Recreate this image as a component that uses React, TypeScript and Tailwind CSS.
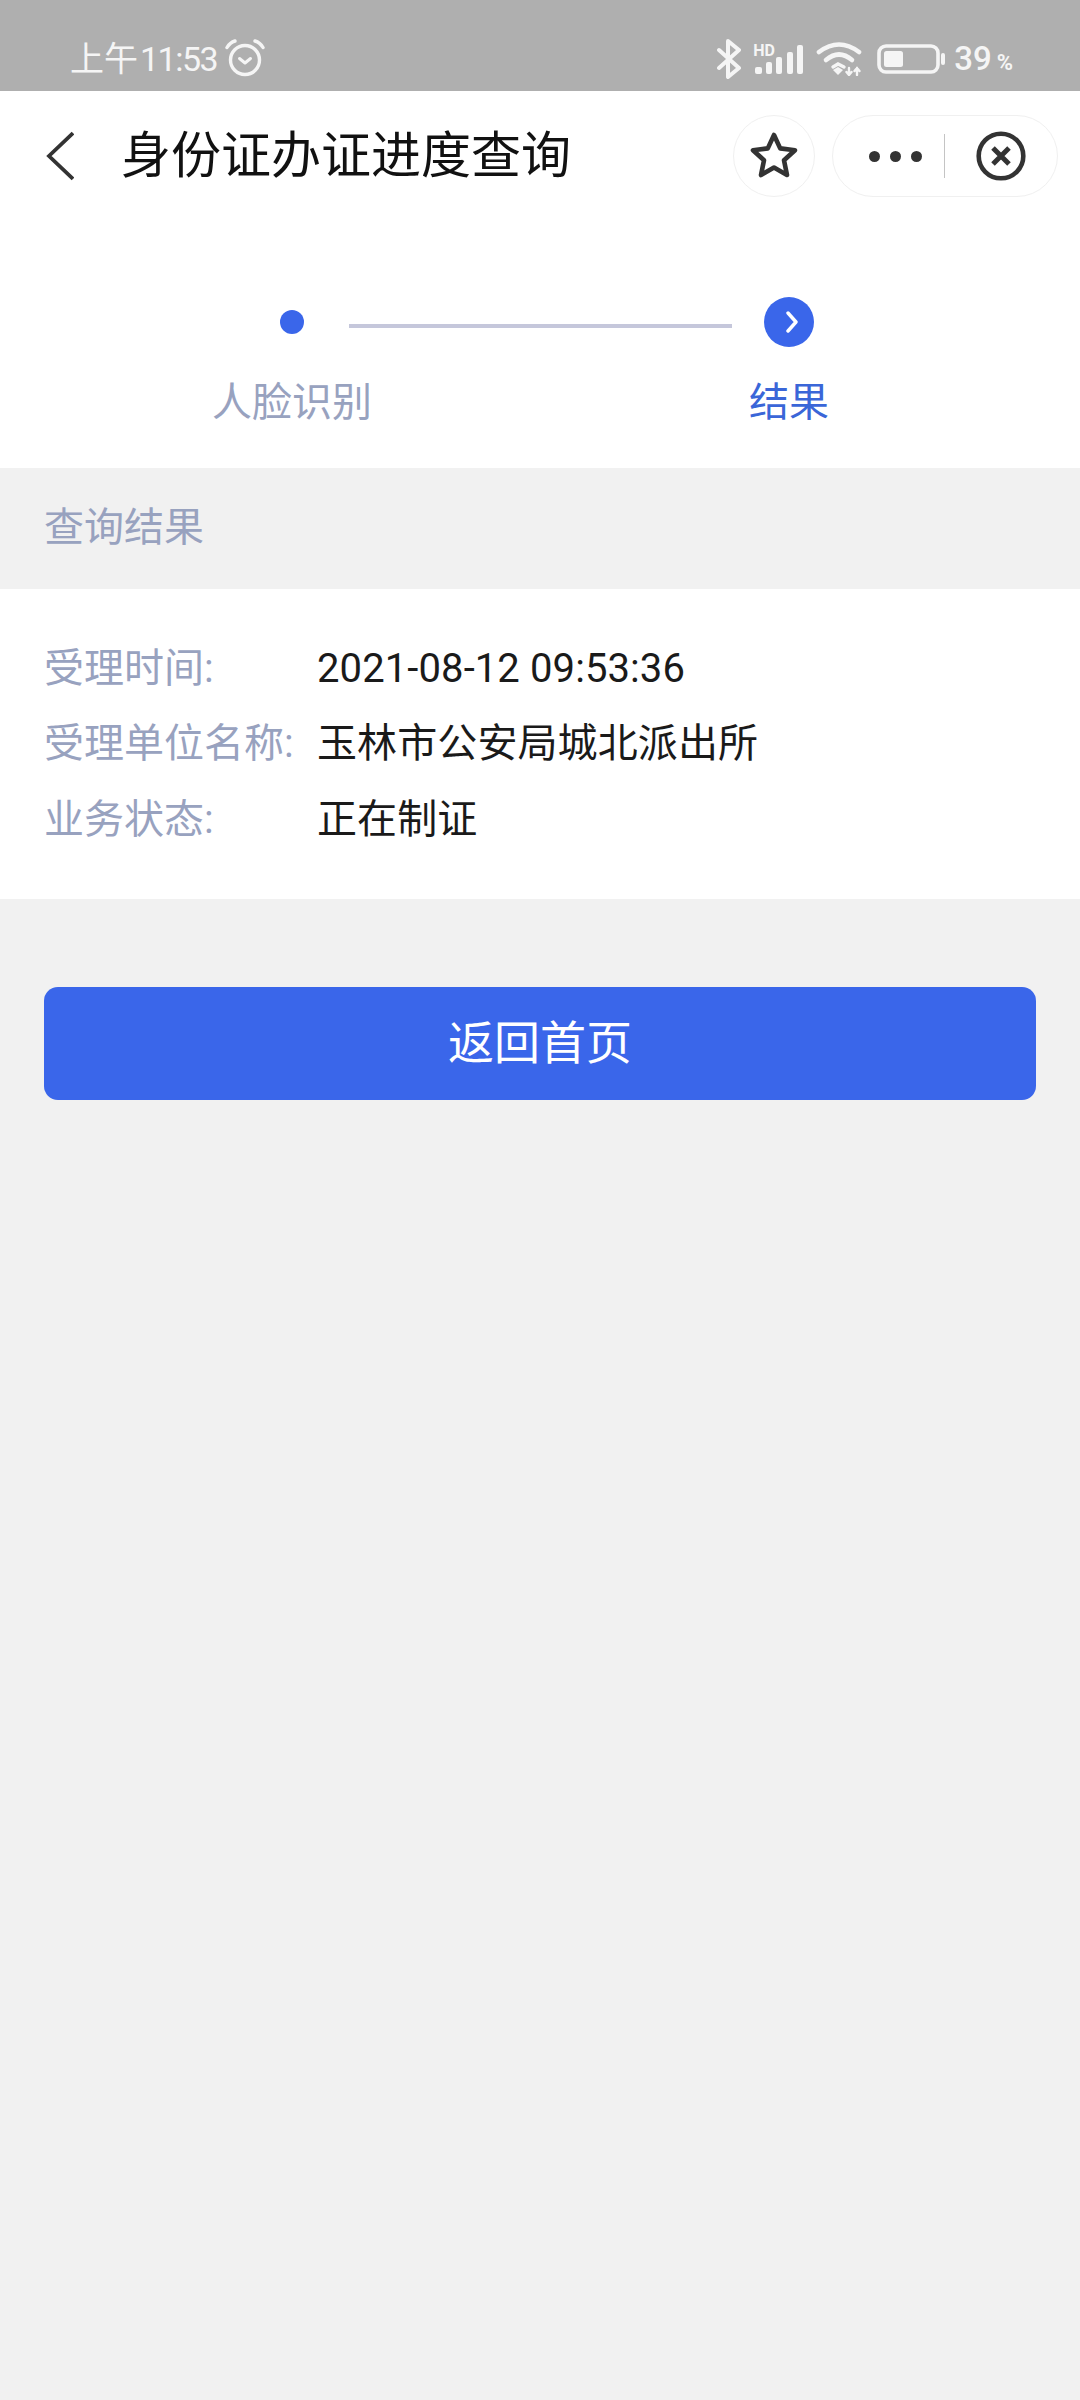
const rows = [
  { label: "受理时间:", value: "2021-08-12 09:53:36" },
  { label: "受理单位名称:", value: "玉林市公安局城北派出所" },
  { label: "业务状态:", value: "正在制证" },
];

function AlarmIcon() {
  return (
    <svg width="40" height="38" viewBox="0 0 40 38" fill="none" stroke="#f5f5f5" strokeLinecap="round" strokeLinejoin="round">
      <circle cx="20" cy="21" r="14.5" strokeWidth="3.4" />
      <path d="M14.5 19.5 L20 24 L25.5 19.5" strokeWidth="3" />
      <path d="M2 8.5 Q5 3.5 10 2" strokeWidth="3.4" />
      <path d="M38 8.5 Q35 3.5 30 2" strokeWidth="3.4" />
    </svg>
  );
}

function StatusIcons() {
  return (
    <div className="flex items-center text-[#f5f5f5]">
      <svg width="24" height="40" viewBox="0 0 24 40" fill="none" stroke="#f5f5f5" strokeWidth="4" strokeLinecap="round" strokeLinejoin="round">
        <path d="M2 11 L22 29 L11 38 L11 2 L22 11 L2 29" />
      </svg>
      <div className="relative ml-3 h-[32px] w-[50px]">
        <svg width="50" height="32" viewBox="0 0 50 32" fill="#f5f5f5">
          <rect x="2" y="24" width="7" height="7" rx="2" />
          <rect x="13" y="19" width="6" height="12" rx="2" />
          <rect x="23" y="14" width="6" height="17" rx="2" />
          <rect x="34" y="9" width="6" height="22" rx="2" />
          <rect x="44" y="2" width="6" height="29" rx="2" />
        </svg>
        <span className="absolute left-0 top-0 text-[16px] font-bold leading-[16px]">HD</span>
      </div>
      <svg className="ml-[13px]" width="46" height="34" viewBox="0 0 46 34" fill="none" stroke="#f5f5f5" strokeWidth="4.6" strokeLinecap="round">
        <path d="M3 10 Q23 -5 43 10" />
        <path d="M10 18 Q23 7 36 18" />
        <path d="M17 25 L22 22 L28 25" strokeWidth="3.4" />
        <path d="M17 28 L22 25 L27 28 L22 33 Z" fill="#f5f5f5" stroke="none" />
        <path d="M33 26 L33 33 M30.5 30 L33 33 L35.5 30 M41 33 L41 26 M38.5 29 L41 26 L43.5 29" strokeWidth="2.4" />
      </svg>
      <svg className="ml-[15px]" width="68" height="30" viewBox="0 0 68 30" fill="none">
        <rect x="2" y="2" width="59" height="26" rx="7" stroke="#f5f5f5" strokeWidth="3.6" />
        <rect x="7" y="7" width="19" height="16" rx="2.5" fill="#f5f5f5" />
        <rect x="64" y="9" width="4" height="12" rx="2" fill="#f5f5f5" />
      </svg>
      <span className="ml-[9px] text-[33px] font-medium leading-[40px]">39</span>
      <span className="ml-[5px] mt-[8px] text-[22px] font-bold leading-[26px]">%</span>
    </div>
  );
}

export default function App() {
  return (
    <div className="flex min-h-[2400px] w-[1080px] flex-col bg-[#f1f1f1] font-['Roboto','Noto_Sans_CJK_SC',sans-serif]">
      <div className="flex h-[91px] items-center justify-between bg-[#afafaf] pb-[1px] pl-[70px] pr-[67px] pt-[28px]">
        <div className="flex items-center">
          <span className="text-[34px] leading-[40px] text-[#f5f5f5]">
            上午<span className="ml-[2px] tracking-[-1.5px]">11:53</span>
          </span>
          <span className="ml-[8px] -mt-[2px]">
            <AlarmIcon />
          </span>
        </div>
        <StatusIcons />
      </div>

      <div className="flex h-[130px] items-center bg-white pl-[46px] pr-[22px]">
        <svg width="28" height="50" viewBox="0 0 28 50" fill="none" stroke="#333333" strokeWidth="3.8">
          <path d="M27 2 L3 25 L27 48" />
        </svg>
        <h1 className="ml-[47px] flex-1 text-[50px] font-normal leading-[60px] text-[#111111]">身份证办证进度查询</h1>
        <div className="flex h-[82px] w-[82px] items-center justify-center rounded-full border border-[#f0f0f0]">
          <svg width="48" height="48" viewBox="0 0 48 48" fill="none" stroke="#333333" strokeWidth="4.6" strokeLinejoin="round">
            <path d="M24 3 L30.2 16.4 L45 18.2 L34 28.2 L37 43 L24 35.6 L11 43 L14 28.2 L3 18.2 L17.8 16.4 Z" />
          </svg>
        </div>
        <div className="ml-[17px] flex h-[82px] w-[226px] items-center rounded-full border border-[#f0f0f0] pl-[36px]">
          <div className="flex gap-[10px]">
            <span className="h-[11px] w-[11px] rounded-full bg-[#333333]" />
            <span className="h-[11px] w-[11px] rounded-full bg-[#333333]" />
            <span className="h-[11px] w-[11px] rounded-full bg-[#333333]" />
          </div>
          <span className="ml-[22px] h-[44px] w-[1px] bg-[#c4c4c4]" />
          <svg className="ml-[31px]" width="50" height="50" viewBox="0 0 50 50" fill="none" stroke="#333333">
            <circle cx="25" cy="25" r="22.3" strokeWidth="4.6" />
            <path d="M17 17 L33 33 M33 17 L17 33" strokeWidth="5" />
          </svg>
        </div>
      </div>

      <div className="bg-white pb-[41px] pt-[76px]">
        <div className="flex items-center pl-[280px]">
          <span className="h-[24px] w-[24px] rounded-full bg-[#3a66ea]" />
          <span className="ml-[45px] mt-[8px] h-[4px] w-[383px] bg-[#c5c7db]" />
          <span className="ml-[32px] flex h-[50px] w-[50px] items-center justify-center rounded-full bg-[#3a66ea]">
            <svg className="ml-[5px]" width="14" height="22" viewBox="0 0 14 22" fill="none" stroke="#ffffff" strokeWidth="3.4" strokeLinecap="round" strokeLinejoin="round">
              <path d="M3 2 L11 11 L3 20" />
            </svg>
          </span>
        </div>
        <div className="mt-[32px] flex pl-[212px] text-[40px] leading-[48px]">
          <span className="w-[537px] text-[#98a2bf]">人脸识别</span>
          <span className="text-[#3a66d8]">结果</span>
        </div>
      </div>

      <div className="flex h-[121px] items-center pb-[2px] pl-[44px] text-[40px] leading-[48px] text-[#98a2bf]">查询结果</div>

      <div className="flex h-[310px] flex-col justify-center gap-[27.5px] bg-white pl-[44px] text-[40px] leading-[48px]">
        {rows.map((row) => (
          <div key={row.label} className="flex">
            <span className="w-[273px] text-[#98a2bf]">{row.label}</span>
            <span className="tracking-[0.1px] text-[#1a1a1a]">{row.value}</span>
          </div>
        ))}
      </div>

      <div className="mx-[44px] mt-[88px] flex h-[113px] items-center justify-center rounded-[14px] bg-[#3a66ea] text-[46px] text-white">
        返回首页
      </div>
    </div>
  );
}
